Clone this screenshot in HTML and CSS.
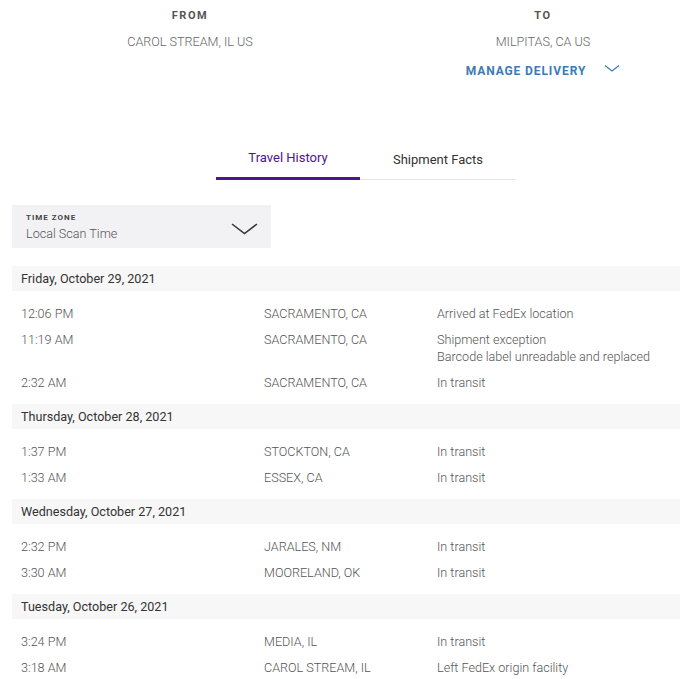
FILE: index.html
```html
<!DOCTYPE html>
<html lang="en">

<head>
    <meta charset="UTF-8">
    <title>Track Shipment</title>
    <link rel="stylesheet" href="styles.css">
</head>

<body>
    <header class="rute">
        <div class="sted">
            <h3>FROM</h3>
            <p class="by">CAROL STREAM, IL US</p>
        </div>
        <div class="sted til">
            <h3>TO</h3>
            <p class="by">MILPITAS, CA US</p>
            <a class="manage" href="#">MANAGE DELIVERY
                <svg width="16" height="9" viewBox="0 0 16 9"><path d="M1 1.5 L8 7 L15 1.5" fill="none" stroke="#3c7bb7" stroke-width="1.2"/></svg>
            </a>
        </div>
    </header>

    <nav class="faner">
        <button class="fane valgt">Travel History</button>
        <button class="fane">Shipment Facts</button>
    </nav>

    <div class="tidszone">
        <div>
            <span class="label">TIME ZONE</span>
            <span class="vaerdi">Local Scan Time</span>
        </div>
        <svg width="27" height="12" viewBox="0 0 27 12"><path d="M1 1 L13.5 10.5 L26 1" fill="none" stroke="#333" stroke-width="1.5"/></svg>
    </div>

    <section class="historik">
        <h4 class="dag">Friday, October 29, 2021</h4>
        <ul class="haendelser">
            <li><span>12:06 PM</span><span>SACRAMENTO, CA</span><span>Arrived at FedEx location</span></li>
            <li><span>11:19 AM</span><span>SACRAMENTO, CA</span><span>Shipment exception<br>Barcode label unreadable and replaced</span></li>
            <li><span>2:32 AM</span><span>SACRAMENTO, CA</span><span>In transit</span></li>
        </ul>

        <h4 class="dag">Thursday, October 28, 2021</h4>
        <ul class="haendelser">
            <li><span>1:37 PM</span><span>STOCKTON, CA</span><span>In transit</span></li>
            <li><span>1:33 AM</span><span>ESSEX, CA</span><span>In transit</span></li>
        </ul>

        <h4 class="dag">Wednesday, October 27, 2021</h4>
        <ul class="haendelser">
            <li><span>2:32 PM</span><span>JARALES, NM</span><span>In transit</span></li>
            <li><span>3:30 AM</span><span>MOORELAND, OK</span><span>In transit</span></li>
        </ul>

        <h4 class="dag">Tuesday, October 26, 2021</h4>
        <ul class="haendelser">
            <li><span>3:24 PM</span><span>MEDIA, IL</span><span>In transit</span></li>
            <li><span>3:18 AM</span><span>CAROL STREAM, IL</span><span>Left FedEx origin facility</span></li>
        </ul>
    </section>
</body>

</html>
```

FILE: styles.css
```css
body {
    margin: 0;
    font-family: Roboto, "Liberation Sans", sans-serif;
    color: #333;
    overflow: hidden;
}

/* fra / til */
.rute {
    display: grid;
    grid-template-columns: 356px 1fr;
    padding: 8px 0 0 12px;
}

.sted {
    text-align: center;
}

.til {
    padding-left: 38px;
}

.sted h3 {
    margin: 0;
    font-size: 11px;
    line-height: 16px;
    font-weight: 700;
    letter-spacing: 1.6px;
    color: #555;
}

.by {
    margin: 10px 0 0;
    font-size: 12.6px;
    line-height: 16px;
    font-weight: 300;
    color: #666;
}

.manage {
    display: inline-flex;
    align-items: center;
    gap: 18px;
    margin-top: 13px;
    font-size: 12px;
    line-height: 16px;
    font-weight: 700;
    letter-spacing: 0.9px;
    color: #3c7bb7;
    text-decoration: none;
}

.manage svg {
    margin-top: -6px;
}

/* faner */
.faner {
    display: flex;
    align-items: flex-end;
    margin: 71px 0 0 216px;
}

.fane {
    font-family: inherit;
    font-size: 13px;
    line-height: 16px;
    background: none;
    border: none;
    border-bottom: 1px solid #e6e6e6;
    padding: 0 0 11px;
    width: 156px;
    color: #333;
}

.fane.valgt {
    width: 144px;
    border-bottom: 3px solid #4d148c;
    color: #4d148c;
}

/* tidszone */
.tidszone {
    display: flex;
    justify-content: space-between;
    align-items: center;
    width: 259px;
    height: 43px;
    box-sizing: border-box;
    margin: 25px 0 0 12px;
    padding: 0 13px 0 14px;
    background-color: #f2f2f5;
}

.tidszone div {
    display: flex;
    flex-direction: column;
    padding-top: 2px;
}

.label {
    font-size: 8px;
    line-height: 10px;
    font-weight: 700;
    letter-spacing: 1px;
    color: #444;
}

.vaerdi {
    margin-top: 3px;
    font-size: 12.6px;
    line-height: 16px;
    font-weight: 300;
    color: #555;
}

.tidszone svg {
    margin-top: 5px;
}

/* historik */
.historik {
    margin: 18px 0 0 12px;
}

.dag {
    margin: 0;
    padding-left: 9px;
    height: 25px;
    line-height: 25px;
    font-size: 12.6px;
    font-weight: 400;
    color: #333;
    background-color: #f7f7f7;
}

.haendelser {
    list-style: none;
    margin: 0;
    padding: 10px 0 8px 9px;
}

.haendelser li {
    display: grid;
    grid-template-columns: 243px 173px 1fr;
    padding: 4px 0 5px;
    font-size: 12.6px;
    line-height: 17px;
    font-weight: 300;
    color: #555;
}
```
